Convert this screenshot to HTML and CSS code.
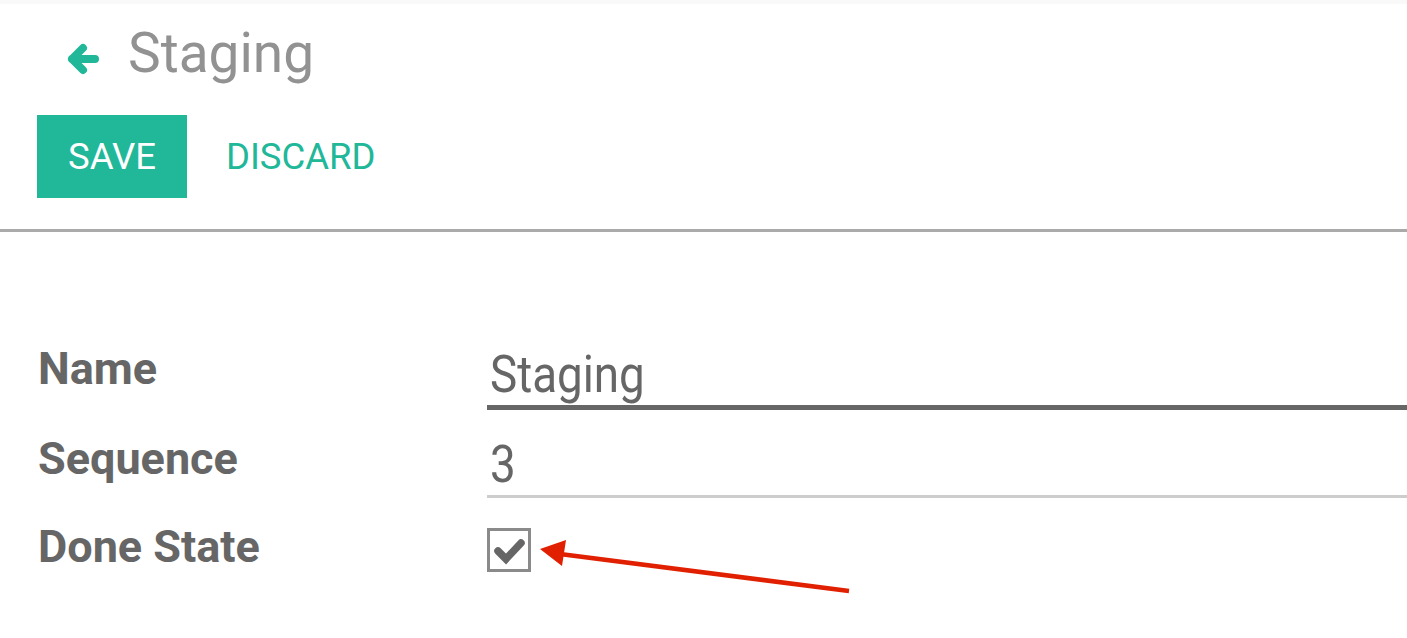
FILE: index.html
```html
<!DOCTYPE html>
<html>
<head>
<meta charset="utf-8">
<link rel="stylesheet" href="styles.css">
</head>
<body>
<div class="page">
  <div class="topband"></div>
  <div class="control-panel">
    <div class="breadcrumb">
      <svg class="back" width="36" height="36" viewBox="0 0 36 36">
        <path d="M18 7 L7 18 L18 29 M7 18 H30" fill="none" stroke="#21b799" stroke-width="8" stroke-linecap="round" stroke-linejoin="round"/>
      </svg>
      <span class="title">Staging</span>
    </div>
    <div class="buttons">
      <button class="btn btn-primary">SAVE</button>
      <button class="btn btn-link">DISCARD</button>
    </div>
  </div>
  <div class="sheet">
    <div class="form">
      <div class="label">Name</div>
      <div class="field field-name"><span class="cond">Staging</span></div>
      <div class="label">Sequence</div>
      <div class="field field-seq"><span class="cond">3</span></div>
      <div class="label">Done State</div>
      <div class="field field-check">
        <span class="checkbox">
          <svg width="38" height="38" viewBox="0 0 38 38">
            <path d="M8 20 L16 28 L31 12" fill="none" stroke="#666" stroke-width="7.5" stroke-linecap="round" stroke-linejoin="miter"/>
          </svg>
        </span>
      </div>
    </div>
    <svg class="annotation" width="1407" height="638" viewBox="0 0 1407 638">
      <line x1="849" y1="594" x2="560" y2="557" stroke="#e02000" stroke-width="4.5"/>
      <polygon points="540,552 566,543 562,569" fill="#e02000"/>
    </svg>
  </div>
</div>
</body>
</html>
```

FILE: styles.css
```css
* { box-sizing: border-box; }
html, body { margin: 0; padding: 0; background: #fff; }
body { font-family: Roboto, "Noto Sans", sans-serif; }
.page { position: relative; width: 1407px; height: 638px; overflow: hidden; }
.topband { height: 4px; background: #f9f9f9; }
.control-panel { padding: 0 0 0 37px; border-bottom: 3px solid #aaaaaa; }
.breadcrumb { display: flex; align-items: center; height: 106px; margin-top: -4px; padding-left: 28px; }
.back { margin-right: 27px; margin-top: 12px; }
.title { font-size: 55px; color: #929292; line-height: 1; }
.buttons { display: flex; align-items: center; padding-bottom: 31px; gap: 8px; margin-top: 9px; }
.btn { font-family: Roboto, sans-serif; font-size: 36.5px; border: 0; height: 83px; padding: 0 31px; cursor: pointer; }
.btn-primary { background: #21b799; color: #fff; }
.btn-link { background: transparent; color: #21b799; }
.sheet { position: relative; padding: 113px 0 0 38px; }
.form { display: grid; grid-template-columns: 449px 1fr; row-gap: 25px; }
.label { font-weight: 700; font-size: 45px; color: #666; line-height: 48px; white-space: nowrap; }
.cond { display: inline-block; transform: scaleX(0.88); transform-origin: left center; white-space: nowrap; }
.field { font-size: 52px; color: #666; line-height: 60px; padding-left: 3px; }
.field-name { border-bottom: 5px solid #666; }
.field-seq { border-bottom: 3px solid #cdcdcd; }
.field-check { padding-left: 0; padding-top: 5px; }
.checkbox { display: flex; align-items: center; justify-content: center; width: 44px; height: 44px; border: 3px solid #8a8a8a; }
.annotation { position: absolute; left: 0; top: -235px; pointer-events: none; }
```
